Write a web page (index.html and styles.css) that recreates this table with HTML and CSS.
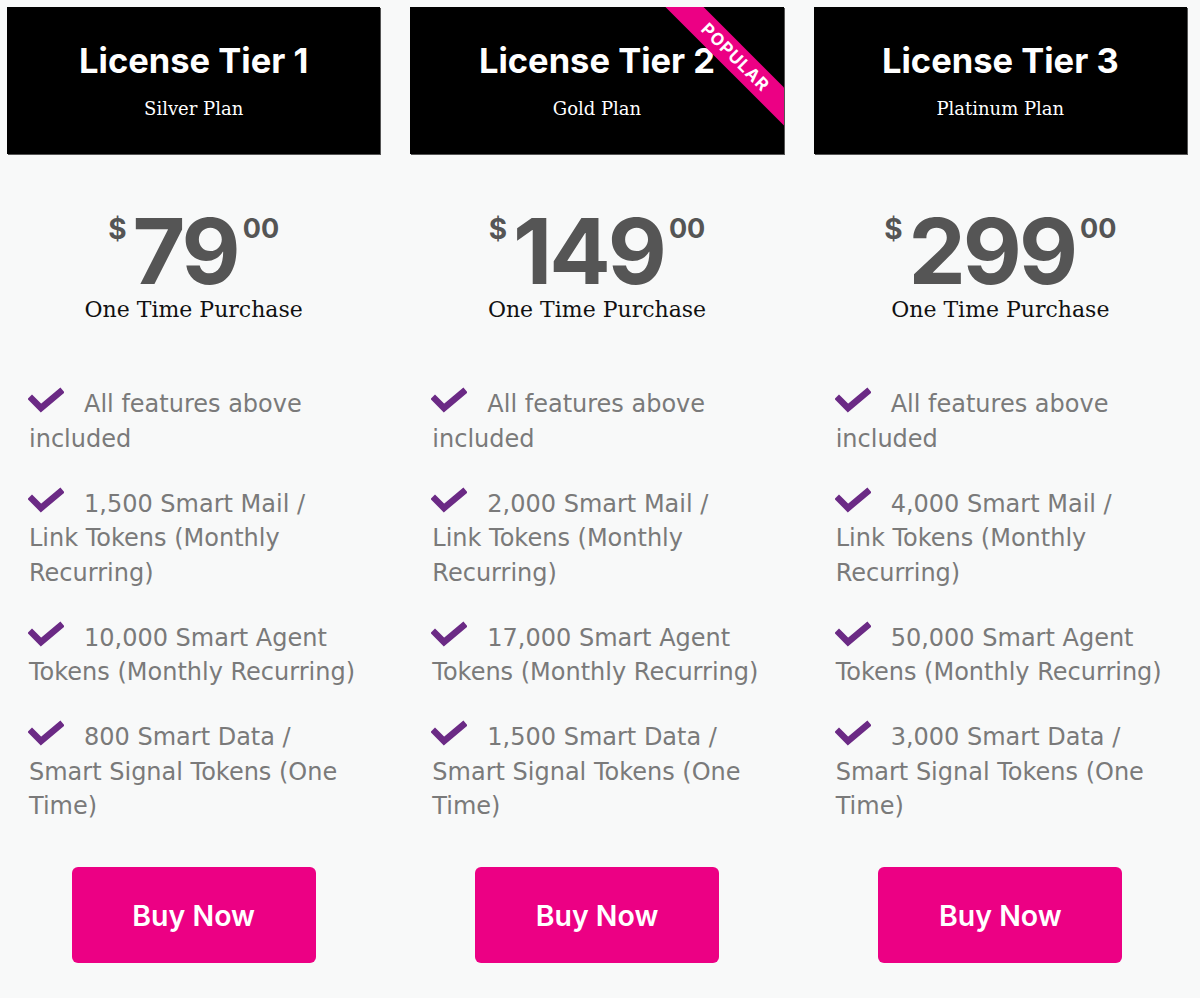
FILE: index.html
```html
<!DOCTYPE html>
<html lang="en">
<head>
    <meta charset="UTF-8">
    <meta name="viewport" content="width=device-width, initial-scale=1.0">
    <title>License Tiers</title>
    <link rel="stylesheet" href="styles.css">
</head>
<body>
    <div class="pricing">

        <div class="plan">
            <div class="plan-header">
                <h2>License Tier 1</h2>
                <p>Silver Plan</p>
            </div>
            <div class="price">
                <span class="currency">$</span>
                <span class="amount">79</span>
                <span class="cents">00</span>
            </div>
            <div class="price-note">One Time Purchase</div>
            <ul class="features">
                <li><svg class="check" viewBox="0 0 36 26"><polyline points="4,12 13,21 32,5"/></svg>All features above included</li>
                <li><svg class="check" viewBox="0 0 36 26"><polyline points="4,12 13,21 32,5"/></svg>1,500 Smart Mail / Link Tokens (Monthly Recurring)</li>
                <li><svg class="check" viewBox="0 0 36 26"><polyline points="4,12 13,21 32,5"/></svg>10,000 Smart Agent Tokens (Monthly Recurring)</li>
                <li><svg class="check" viewBox="0 0 36 26"><polyline points="4,12 13,21 32,5"/></svg>800 Smart Data / Smart Signal Tokens (One Time)</li>
            </ul>
            <a class="buy-btn" href="#">Buy Now</a>
        </div>

        <div class="plan">
            <div class="plan-header">
                <span class="ribbon">POPULAR</span>
                <h2>License Tier 2</h2>
                <p>Gold Plan</p>
            </div>
            <div class="price">
                <span class="currency">$</span>
                <span class="amount">149</span>
                <span class="cents">00</span>
            </div>
            <div class="price-note">One Time Purchase</div>
            <ul class="features">
                <li><svg class="check" viewBox="0 0 36 26"><polyline points="4,12 13,21 32,5"/></svg>All features above included</li>
                <li><svg class="check" viewBox="0 0 36 26"><polyline points="4,12 13,21 32,5"/></svg>2,000 Smart Mail / Link Tokens (Monthly Recurring)</li>
                <li><svg class="check" viewBox="0 0 36 26"><polyline points="4,12 13,21 32,5"/></svg>17,000 Smart Agent Tokens (Monthly Recurring)</li>
                <li><svg class="check" viewBox="0 0 36 26"><polyline points="4,12 13,21 32,5"/></svg>1,500 Smart Data / Smart Signal Tokens (One Time)</li>
            </ul>
            <a class="buy-btn" href="#">Buy Now</a>
        </div>

        <div class="plan">
            <div class="plan-header">
                <h2>License Tier 3</h2>
                <p>Platinum Plan</p>
            </div>
            <div class="price">
                <span class="currency">$</span>
                <span class="amount">299</span>
                <span class="cents">00</span>
            </div>
            <div class="price-note">One Time Purchase</div>
            <ul class="features">
                <li><svg class="check" viewBox="0 0 36 26"><polyline points="4,12 13,21 32,5"/></svg>All features above included</li>
                <li><svg class="check" viewBox="0 0 36 26"><polyline points="4,12 13,21 32,5"/></svg>4,000 Smart Mail / Link Tokens (Monthly Recurring)</li>
                <li><svg class="check" viewBox="0 0 36 26"><polyline points="4,12 13,21 32,5"/></svg>50,000 Smart Agent Tokens (Monthly Recurring)</li>
                <li><svg class="check" viewBox="0 0 36 26"><polyline points="4,12 13,21 32,5"/></svg>3,000 Smart Data / Smart Signal Tokens (One Time)</li>
            </ul>
            <a class="buy-btn" href="#">Buy Now</a>
        </div>

    </div>
</body>
</html>
```

FILE: styles.css
```css
:root {
    --page-bg: #f8f9f9;
    --pink: #ec0084;
    --purple: #6b2a85;
    --price-gray: #555555;
    --feature-gray: #7a7a7a;
}

body {
    margin: 0;
    padding: 0;
    background: var(--page-bg);
    font-family: "DejaVu Sans", Arial, sans-serif;
}

.pricing {
    display: grid;
    grid-template-columns: repeat(3, 1fr);
    column-gap: 30px;
    padding: 7px 13px 0 7px;
}

.plan {
    display: flex;
    flex-direction: column;
}

.plan-header {
    position: relative;
    overflow: hidden;
    background: #000;
    height: 147px;
    box-sizing: border-box;
    padding-top: 31px;
    text-align: center;
    color: #fff;
    box-shadow: 1px 1px 0 #555;
}

.plan-header h2 {
    margin: 0;
    font-family: Inter, "Open Sans", sans-serif;
    font-weight: 700;
    font-size: 34.5px;
    line-height: 46px;
}

.plan-header p {
    margin: 13px 0 0;
    font-family: "DejaVu Serif", serif;
    font-size: 18px;
    line-height: 24px;
}

/* diagonal corner band on the featured plan */
.ribbon {
    position: absolute;
    top: 37px;
    right: -51px;
    width: 200px;
    height: 27px;
    line-height: 27px;
    background: var(--pink);
    color: #fff;
    font-family: Inter, sans-serif;
    font-weight: 700;
    font-size: 17px;
    letter-spacing: 1px;
    text-align: center;
    transform: rotate(45deg);
}

.price {
    display: flex;
    justify-content: center;
    align-items: flex-start;
    margin-top: 52px;
    color: var(--price-gray);
    font-family: Inter, sans-serif;
    font-weight: 700;
}

.currency {
    font-size: 28px;
    line-height: 1;
    margin-top: 9px;
    margin-right: 6px;
}

.amount {
    font-size: 91px;
    line-height: 90px;
    letter-spacing: -3px;
}

.cents {
    font-size: 27px;
    line-height: 1;
    margin-top: 9px;
    margin-left: 5px;
}

.price-note {
    text-align: center;
    font-family: "DejaVu Serif", serif;
    font-size: 22px;
    line-height: 28px;
    color: #111;
}

.features {
    list-style: none;
    margin: 63px 0 0;
    padding: 0 22px;
    color: var(--feature-gray);
    font-size: 24px;
    line-height: 34.5px;
}

.features li {
    margin-bottom: 30.5px;
}

.check {
    display: inline-block;
    width: 36px;
    height: 26px;
    margin-right: 20px;
    margin-left: -1px;
    vertical-align: top;
}

.check polyline {
    fill: none;
    stroke: var(--purple);
    stroke-width: 6.5;
    stroke-linecap: square;
}

.buy-btn {
    align-self: center;
    display: flex;
    align-items: center;
    justify-content: center;
    width: 244px;
    height: 96px;
    margin-top: 13px;
    background: var(--pink);
    color: #fff;
    border-radius: 6px;
    text-decoration: none;
    font-family: Inter, sans-serif;
    font-weight: 600;
    font-size: 28.5px;
}
```
